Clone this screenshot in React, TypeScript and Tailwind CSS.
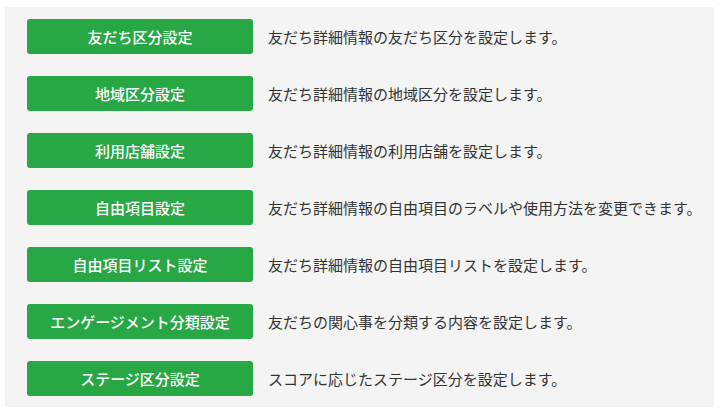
import React from "react";

const rows = [
  ["友だち区分設定", "友だち詳細情報の友だち区分を設定します。"],
  ["地域区分設定", "友だち詳細情報の地域区分を設定します。"],
  ["利用店舗設定", "友だち詳細情報の利用店舗を設定します。"],
  ["自由項目設定", "友だち詳細情報の自由項目のラベルや使用方法を変更できます。"],
  ["自由項目リスト設定", "友だち詳細情報の自由項目リストを設定します。"],
  ["エンゲージメント分類設定", "友だちの関心事を分類する内容を設定します。"],
  ["ステージ区分設定", "スコアに応じたステージ区分を設定します。"],
];

export default function App() {
  return (
    <div
      className="w-[720px] h-[411px] bg-white pt-[7px] pl-[5px]"
      style={{ fontFamily: '"Noto Sans CJK JP", "Noto Sans", sans-serif' }}
    >
      <div className="w-[709px] h-[400px] bg-[#f4f4f4] pt-[12px] pl-[22px] flex flex-col gap-[22px]">
        {rows.map(([label, desc]) => (
          <div key={label} className="flex items-center h-[35px]">
            <button className="w-[226px] h-[35px] rounded-[3px] bg-[#28a745] text-white text-[15px] font-medium leading-none flex items-center justify-center">
              {label}
            </button>
            <span className="ml-[15px] -mt-[1px] text-[15px] text-[#333333] leading-none">{desc}</span>
          </div>
        ))}
      </div>
    </div>
  );
}
